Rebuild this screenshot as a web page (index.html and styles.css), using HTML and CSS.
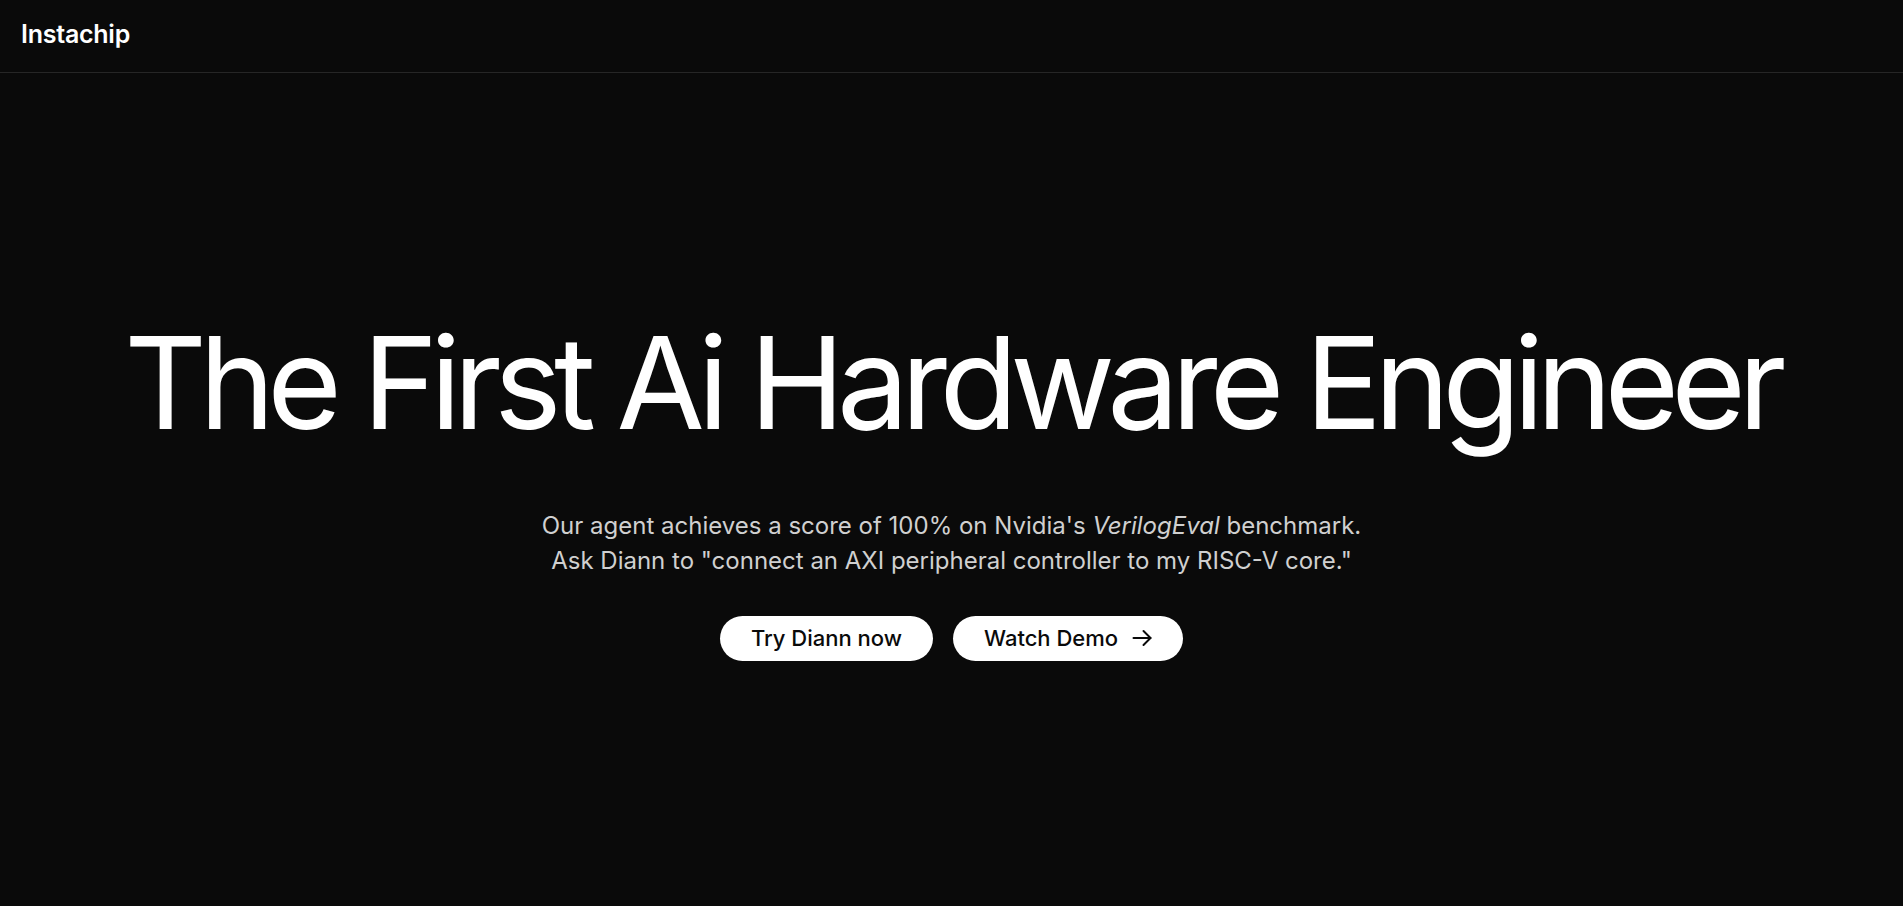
FILE: index.html
```html
<!DOCTYPE html>
<html lang="en">
<head>
<meta charset="utf-8">
<title>Instachip</title>
<link rel="stylesheet" href="styles.css">
</head>
<body>
<header class="topbar">
  <a class="logo" href="#">Instachip</a>
</header>
<main class="hero">
  <h1 class="title">The First Ai Hardware Engineer</h1>
  <p class="lead">Our agent achieves a score of 100% on Nvidia's <em>VerilogEval</em> benchmark.<br>Ask Diann to "connect an AXI peripheral controller to my RISC-V core."</p>
  <div class="actions">
    <a class="btn" href="#">Try Diann now</a>
    <a class="btn" href="#">Watch Demo
      <svg class="arrow" width="20" height="20" viewBox="0 0 20 20" fill="none" stroke="currentColor" stroke-width="2" stroke-linecap="round" stroke-linejoin="round"><path d="M1.5 10h17"/><path d="M11.5 3l7 7-7 7"/></svg>
    </a>
  </div>
</main>
</body>
</html>
```
FILE: styles.css
```css
* { box-sizing: border-box; }
html, body { margin: 0; padding: 0; }
body {
  background: #0a0a0a;
  color: #ffffff;
  font-family: Inter, "Noto Sans", sans-serif;
  min-height: 100vh;
}
.topbar {
  height: 73px;
  display: flex;
  align-items: center;
  padding: 0 21px 4px;
  border-bottom: 1px solid #262626;
}
.logo {
  color: #fff;
  text-decoration: none;
  font-size: 25px;
  font-weight: 600;
  letter-spacing: -0.01em;
}
.hero {
  min-height: calc(100vh - 73px);
  display: flex;
  flex-direction: column;
  align-items: center;
  justify-content: center;
  text-align: center;
}
.title {
  margin: 0;
  font-size: 128px;
  line-height: 1;
  font-weight: 400;
  letter-spacing: -0.06em;
}
.lead {
  margin: 61px 0 0;
  font-size: 24px;
  line-height: 35px;
  color: #d0d0d0;
}
.lead em { font-style: italic; }
.actions {
  margin-top: 38px;
  display: flex;
  gap: 20px;
}
.btn {
  display: inline-flex;
  align-items: center;
  gap: 14px;
  height: 45px;
  padding: 0 31px;
  border-radius: 999px;
  background: #fff;
  color: #0a0a0a;
  text-decoration: none;
  font-size: 22px;
  font-weight: 500;
}
.arrow { display: block; }
```
